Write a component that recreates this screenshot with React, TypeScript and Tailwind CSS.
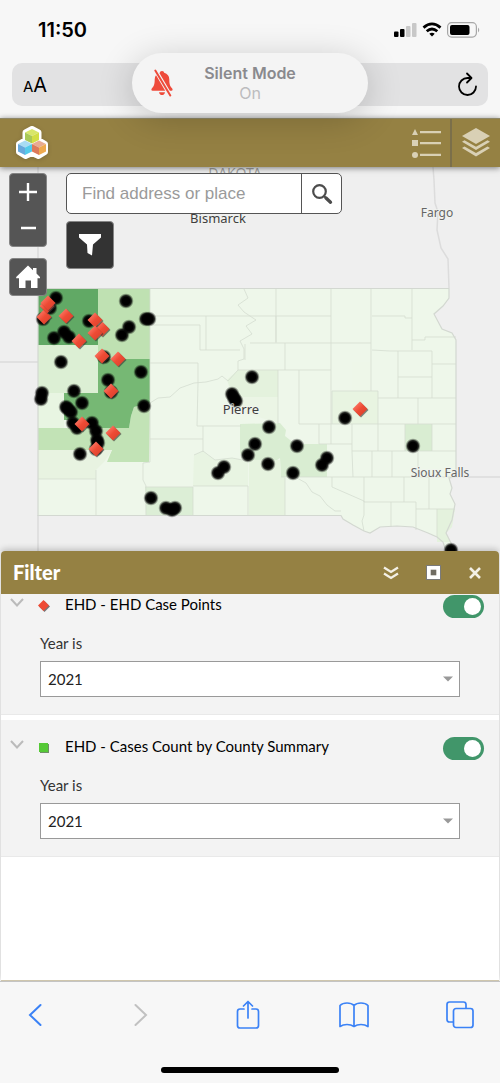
import React from "react";

const DOTS: [number, number][] = [
  [56, 298], [50, 308], [43, 319], [54, 338], [64, 332], [69, 337], [89, 321], [126, 301], [146, 319], [149, 319],
  [129, 327], [122, 335], [104, 357], [61, 362], [141, 372], [108, 380], [111, 392], [42, 393], [41, 399], [74, 391],
  [82, 403], [66, 407], [68, 409], [71, 412], [144, 406], [73, 423], [77, 428], [92, 423], [96, 431], [97, 440],
  [98, 443], [96, 449], [80, 454], [151, 498], [166, 508], [172, 510], [175, 508], [252, 377], [232, 394], [234, 398],
  [236, 401], [269, 427], [255, 444], [248, 455], [268, 464], [224, 467], [218, 473], [297, 446], [293, 473],
  [327, 458], [322, 465], [345, 418], [413, 446], [451, 550],
];

const DIAMONDS: [number, number][] = [
  [44, 317], [47, 306], [48, 303], [66, 316], [79, 341], [102, 329], [95, 320], [95, 333], [102, 356], [118, 359],
  [111, 391], [82, 424], [113, 433], [96, 449], [360, 409],
];

const STATE =
  "M38 288.500H449V298L443 306L434 314L442 329L452 333L456 340V477L449 478L452 488L450 494L455 504L452 520L446 533L455 551H446L443 542L437 537L428 533L413 527L397 526L380 527L370 533L364 531L353 525L343 519L341 515.500H38Z";

const COUNTIES: [string, string][] = [
  ["M38 288H98V345H38Z", "#61a965"],
  ["M98 288H150V359H98Z", "#bfe1b2"],
  ["M38 345H98V393H38Z", "#dcefd4"],
  ["M38 393H64V428H38Z", "#e8f5e2"],
  ["M38 428H129L131 416L134 407L150 403L149 462H107L112 450H38Z", "#c2e3b6"],
  ["M98 359H150V403L134 407L131 416L129 428H73L70 420H64V393H98Z", "#76b874"],
  ["M38 450H112L104 462L96 470V479H38Z", "#e8f3e1"],
  ["M145 487H193V515H146Z", "#dceed6"],
  ["M194 455L203 451L215 460L232 458L248 461V486H193Z", "#e8f4e2"],
  ["M240 424L280 423L286 430L285 436L295 444H327V477H281L280 458L274 462L248 461L240 453Z", "#d9edd2"],
  ["M249 460L280 460L281 477H285V515H249Z", "#e6f3df"],
  ["M227 380L238 370H278V397H233Z", "#e4f2dd"],
  ["M233 397H278V424L262 418L233 410Z", "#ebf5e5"],
  ["M332 391H378V424H332Z", "#e8f4e1"],
  ["M405 424H432V451H405Z", "#d9edd2"],
  ["M437 509H455L452 527L446 533L450 542H437Z", "#e4f2dd"],
  ["M352 362H372V391H352Z", "#eef7e9"],
];

const COUNTY_LINES = [
  "M150 288V462L143 463V480L146 486V515M150 325H200V350H240M150 316H331M96 470V515M38 479H96",
  "M150 403L158 398L170 397L180 388L194 383L206 382L218 379L222 376L228 381L238 370V361L244 359V349L240 341L252 334L246 326L256 320L244 312L238 305L248 298L244 289",
  "M276 288V342M331 288V444M371 288V391M412 288V350M250 343H371M285 343V370M245 344V360M238 370H331M278 370V424M299 370V424",
  "M372 316H405V318H412M412 340H425V337H456M372 350L390 351H432V398M398 351V398H378M398 377H432M432 364H456M398 398H456M418 398V424",
  "M150 363H198V383L197 426H241M150 439H203V426M203 439V452M299 424H456M319 424V444H352M352 424V452L353 477M378 391V451M332 391H378M332 391V424",
  "M352 451H456M372 451V477M392 451V477M418 451V477M405 424V451M432 424V451M281 477H456M332 477V487L364 501V515L362 521L364 531",
  "M364 477V502H416V530M404 477V502M391 502V527M429 477V509M416 509H455M437 509V537M145 487H193V515M193 486H248V515M285 478V515",
  "M297 478L306 483L312 492L320 496L327 505L335 511L341 511",
  "M276 316V343M206 316V350M194 455L203 451L215 460L232 458L248 461",
];

const DIAMOND = "M0 -7.500L7.500 0L0 7.500L-7.500 0Z";

function CaseMap() {
  return (
    <svg
      className="block h-full w-full"
      viewBox="0 167 500 384"
      preserveAspectRatio="xMidYMid slice"
      role="img"
      aria-label="County map"
    >
      <defs>
        <radialGradient id="dot">
          <stop offset="0.500" stopColor="#000" />
          <stop offset="0.700" stopColor="#000" stopOpacity="0.850" />
          <stop offset="0.850" stopColor="#000" stopOpacity="0.350" />
          <stop offset="1" stopColor="#000" stopOpacity="0" />
        </radialGradient>
        <linearGradient id="gem" x1="0" y1="0" x2="1" y2="1">
          <stop offset="0.200" stopColor="#fb7361" />
          <stop offset="0.500" stopColor="#ee4b35" />
          <stop offset="0.900" stopColor="#d9402c" />
        </linearGradient>
      </defs>
      <rect x="0" y="167" width="500" height="384" fill="#efefef" />
      <g fill="none" stroke="#dcdcdc" strokeWidth="1.500">
        <path d="M38 167V288M38 515V551M0 362H38M456 477H500" />
        <path d="M433 167L434 180L435 203L438 212L437 230L441 248L448 259L449 288" />
      </g>
      <path d={STATE} fill="#eef7ea" />
      {COUNTIES.map(([d, fill]) => (
        <path key={d} d={d} fill={fill} />
      ))}
      <g fill="none" stroke="#d5ddd1" strokeOpacity="0.800">
        {COUNTY_LINES.map((d) => (
          <path key={d} d={d} />
        ))}
      </g>
      <path d={STATE} fill="none" stroke="#d3d8d1" strokeWidth="1.200" />
      {DOTS.map(([x, y]) => (
        <circle key={`${x}-${y}`} cx={x} cy={y} r="7.800" fill="url(#dot)" />
      ))}
      {DIAMONDS.map(([x, y]) => (
        <g key={`${x}-${y}`} transform={`translate(${x} ${y})`}>
          <path d={DIAMOND} transform="translate(1 1)" fill="#333" fillOpacity="0.600" />
          <path d={DIAMOND} fill="url(#gem)" />
        </g>
      ))}
      <g
        className="font-['Noto_Sans',sans-serif] text-[12px]"
        textAnchor="middle"
        stroke="#f2f4f0"
        strokeWidth="2"
        strokeOpacity="0.700"
        paintOrder="stroke"
      >
        <text x="235" y="178" fill="#a3a3a3" className="text-[14px]">DAKOTA</text>
        <text x="218" y="223" fill="#3f3f3f" className="text-[13px]">Bismarck</text>
        <text x="437" y="217" fill="#666">Fargo</text>
        <text x="241" y="414" fill="#3f3f3f" className="text-[13px]">Pierre</text>
        <text x="440" y="477" fill="#666">Sioux Falls</text>
      </g>
    </svg>
  );
}

function StatusIcons() {
  return (
    <svg width="87" height="16" viewBox="0 0 87 16" aria-hidden="true">
      <rect x="0" y="9.500" width="4.500" height="5.500" rx="1" />
      <rect x="6" y="7" width="4.500" height="8" rx="1" />
      <rect x="12" y="4" width="4.500" height="11" rx="1" fill="#c8c8c8" />
      <rect x="18" y="1" width="4.500" height="14" rx="1" fill="#c8c8c8" />
      <g fill="none" stroke="#000" strokeWidth="2.800">
        <path d="M29.500 5.600Q38 -1.800 46.500 5.600" />
        <path d="M32.700 9.200Q38 4.700 43.300 9.200" />
      </g>
      <path d="M35.300 11.800Q38 9.700 40.700 11.800L38 14.600Z" />
      <rect x="53.600" y="0.700" width="28.800" height="14.400" rx="4" fill="none" stroke="#a7a7a7" strokeWidth="1.200" />
      <rect x="56" y="3" width="19.500" height="10" rx="2" />
      <path d="M84 5.500Q86.500 8 84 10.500Z" fill="#a7a7a7" />
    </svg>
  );
}

function BellSlash() {
  return (
    <svg width="24" height="28" viewBox="0 0 24 28" aria-hidden="true">
      <path
        d="M12 2C10.500 2 10 3 9.800 3.700C6.500 4.500 4.700 7 4.700 10.500C4.700 15.500 3.800 17.500 2 19.300C1 20.400 1.300 21.800 2.500 21.800H21.500C22.700 21.800 23 20.400 22 19.300C20.200 17.500 19.300 15.500 19.300 10.500C19.300 7 17.500 4.500 14.200 3.700C14 3 13.500 2 12 2Z"
        fill="#ee4b3b"
      />
      <path d="M9 23.200H15Q14.500 26 12 26T9 23.200Z" fill="#ee4b3b" />
      <path d="M5.300 1L20.300 26.500" stroke="#f4f4f4" strokeWidth="4" />
      <path d="M5.300 1.500L20.300 26.500" stroke="#ee4b3b" strokeWidth="2" strokeLinecap="round" />
    </svg>
  );
}

function CubesLogo() {
  return (
    <svg width="36" height="36" viewBox="0 0 36 36" aria-label="App logo" role="img" className="drop-shadow-sm">
      <path
        d="M18 4L24.500 7.500V15L31 19V27L24.500 31L18 28L11.500 31L5 27V19L11.500 15V7.500Z"
        fill="#fff"
        stroke="#fff"
        strokeWidth="6"
        strokeLinejoin="round"
      />
      <path d="M18 4L25 7.500L18 11L11 7.500Z" fill="#d8e66a" />
      <path d="M11 7.500L18 11V18.500L11 15Z" fill="#a9c957" />
      <path d="M25 7.500L18 11V18.500L25 15Z" fill="#d2de45" />
      <path d="M11 15.500L18 19L11 22.500L4 19Z" fill="#a8dcf3" />
      <path d="M4 19L11 22.500V30L4 26.500Z" fill="#68a9dc" />
      <path d="M18 19L11 22.500V30L18 26.500Z" fill="#55cbea" />
      <path d="M25 15.500L32 19L25 22.500L18 19Z" fill="#e8ab91" />
      <path d="M18 19L25 22.500V30L18 26.500Z" fill="#dc7a5b" />
      <path d="M32 19L25 22.500V30L32 26.500Z" fill="#efaa4f" />
    </svg>
  );
}

function FilterItem({ id, title, children }: { id: string; title: string; children: React.ReactNode }) {
  return (
    <section className="h-[137px] border-b border-[#e9e9e9] bg-[#f3f3f3] pt-4">
      <div className="flex h-6 items-center pr-[15px]">
        <button aria-label={`Collapse ${title}`} className="flex w-8 justify-center self-start pt-1">
          <svg width="14" height="9" viewBox="0 0 14 9" fill="none" stroke="#bbb" strokeWidth="2">
            <path d="M1 1L7 7.500L13 1" />
          </svg>
        </button>
        <span className="flex w-[22px] justify-center">{children}</span>
        <label htmlFor={`${id}-on`} className="ml-[10px] flex-1 pb-1 font-['Lato',sans-serif] text-[15px] leading-5 text-black">
          {title}
        </label>
        <input
          id={`${id}-on`}
          type="checkbox"
          defaultChecked
          className="flex h-[23px] w-[41px] appearance-none items-center rounded-full bg-[#a8a8a8] px-[3px] before:block before:size-[17px] before:rounded-full before:bg-white checked:justify-end checked:bg-[#41966a]"
        />
      </div>
      <div className="flex flex-col px-[39px] pt-[15px]">
        <label htmlFor={`${id}-year`} className="font-['Lato',sans-serif] text-[15px] leading-5 text-[#333]">
          Year is
        </label>
        <div className="mt-2 grid items-center">
          <select
            id={`${id}-year`}
            className="col-start-1 row-start-1 h-9 w-full appearance-none border border-[#999] bg-white px-[7px] font-['Lato',sans-serif] text-[15px] text-[#222]"
          >
            <option>2021</option>
          </select>
          <svg className="pointer-events-none col-start-1 row-start-1 mr-[7px] justify-self-end" width="10" height="6" viewBox="0 0 10 6">
            <path d="M0 0.500H10L5 5.500Z" fill="#999" />
          </svg>
        </div>
      </div>
    </section>
  );
}

export default function App() {
  return (
    <div className="relative flex min-h-screen flex-col overflow-hidden bg-[#f7f7f7] font-['Inter',sans-serif]">
      <div className="px-3 pb-3">
        <div className="flex h-[63px] items-start justify-between pr-[7px] pl-[26px]">
          <span className="pt-4 text-[20px] leading-7 font-semibold text-black">11:50</span>
          <span className="pt-[22px]"><StatusIcons /></span>
        </div>
        <div className="flex h-[43px] items-center rounded-[10px] bg-[#e2e2e3] pr-[9px] pl-[11px]">
          <button aria-label="Page settings" className="flex items-baseline text-black">
            <span className="text-[15px]">A</span>
            <span className="text-[20px]">A</span>
          </button>
          <button aria-label="Reload" className="ml-auto">
            <svg width="24" height="26" viewBox="0 0 24 26" fill="none" stroke="#000" strokeWidth="1.800" strokeLinecap="round" strokeLinejoin="round">
              <path d="M15 6H12.500A8.500 8.500 0 1 0 21 14.500" />
              <path d="M12 1.500L16.500 6L12 10.500" />
            </svg>
          </button>
        </div>
      </div>

      <div
        role="status"
        className="absolute top-[53px] left-1/2 z-30 flex h-[60px] w-[236px] -translate-x-1/2 items-center rounded-full bg-[#f4f4f4] px-[18px] shadow-[0_6px_36px_rgba(0,0,0,0.2)]"
      >
        <BellSlash />
        <div className="flex-1 pr-6 text-center">
          <div className="text-[16px] leading-5 font-semibold text-[#8a8a8e]">Silent Mode</div>
          <div className="text-[16px] leading-5 text-[#bcbcbe]">On</div>
        </div>
      </div>

      <header className="relative z-10 flex h-[49px] items-center border-t border-[#8e8768] bg-[#958143] pl-[14px] shadow-[0_1px_6px_rgba(0,0,0,0.5)]">
        <CubesLogo />
        <button aria-label="Legend" className="mr-[7px] ml-auto">
          <svg width="32" height="32" viewBox="0 0 32 32" fill="#d9d0b5">
            <path d="M4 2L7 8H1ZM1 13H7V19H1ZM9 4H30V6.300H9ZM9 15H30V17.300H9ZM9 26.800H30V29H9Z" />
            <circle cx="4" cy="28" r="3" />
          </svg>
        </button>
        <button aria-label="Layers" className="flex h-full w-[50px] items-center justify-center border-l-2 border-[#7b6f4a]">
          <svg width="30" height="32" viewBox="0 0 30 32" fill="#d9d0b5">
            <path d="M15 1L29 9L15 17L1 9Z" />
            <path d="M1 14.800L3.500 13.200L15 19.800L26.500 13.200L29 14.800L15 23Z" />
            <path d="M1 21L3.500 19.400L15 26L26.500 19.400L29 21L15 29.400Z" />
          </svg>
        </button>
      </header>

      <main className="relative h-96 shrink-0">
        <CaseMap />
        <div className="absolute top-[6px] left-[9px] flex flex-col gap-[11px]">
          <div className="flex w-[38px] flex-col overflow-hidden rounded-[4px] border border-[#858585] bg-[#555] text-white">
            <button aria-label="Zoom in" className="flex h-9 items-center justify-center">
              <svg width="18" height="18" viewBox="0 0 18 18" stroke="#fff" strokeWidth="2.400"><path d="M0 9H18M9 0V18" /></svg>
            </button>
            <button aria-label="Zoom out" className="flex h-9 items-center justify-center">
              <svg width="15" height="4" viewBox="0 0 15 4" stroke="#fff" strokeWidth="2.600"><path d="M0 2H15" /></svg>
            </button>
          </div>
          <button aria-label="Home" className="flex h-[38px] w-[38px] items-center justify-center rounded-[4px] border border-[#858585] bg-[#555]">
            <svg width="26" height="26" viewBox="0 0 26 26" fill="#fff">
              <path d="M13 1.500L18 6.300V4H21.500V9.600L25 13V14.300H22.500V24H16V16.500H10.500V24H4V14.300H1.200V13Z" />
            </svg>
          </button>
        </div>
        <div className="absolute top-[6px] left-[66px] flex flex-col items-start gap-[7px]">
          <form className="flex h-[41px] w-[276px] overflow-hidden rounded-[5px] border border-[#555] bg-white" onSubmit={(e) => e.preventDefault()}>
            <input
              type="text"
              aria-label="Find address or place"
              placeholder="Find address or place"
              className="min-w-0 flex-1 pl-[15px] font-['Liberation_Sans',sans-serif] text-[17px] placeholder:text-[#9a9a9a]"
            />
            <button aria-label="Search" className="flex w-10 items-center justify-center border-l border-[#555]">
              <svg width="22" height="22" viewBox="0 0 22 22" fill="none" stroke="#4c4c4c">
                <circle cx="8.500" cy="8.500" r="6.300" strokeWidth="2.200" />
                <path d="M13 13L15 15" strokeWidth="2" />
                <path d="M15 15L19.500 19.200" strokeWidth="3.400" strokeLinecap="round" />
              </svg>
            </button>
          </form>
          <button aria-label="Filter" className="flex h-12 w-12 items-center justify-center rounded-[4px] border border-[#858585] bg-[#333]">
            <svg width="24" height="24" viewBox="0 0 24 24" fill="#fff">
              <path d="M1 1H23V4.500L15 11.500L14 22.500L9.500 20L9 11.500L1 4.500Z" />
            </svg>
          </button>
        </div>
      </main>

      <section className="relative mx-px flex flex-1 flex-col rounded-t-[4px] border-b border-[#cfc6ad] bg-white shadow-[0_-2px_6px_rgba(0,0,0,0.2)]">
        <div className="relative z-10 flex h-[43px] items-center rounded-t-[4px] bg-[#958143] pr-[3px] pl-3">
          <h2 className="flex-1 pb-[2px] font-['Lato',sans-serif] text-[20px] leading-6 font-black text-white">Filter</h2>
          <button aria-label="Minimize" className="flex w-[42px] justify-center">
            <svg width="16" height="14" viewBox="0 0 16 14" fill="none" stroke="#f3f0e6" strokeWidth="2.300">
              <path d="M1 1.500L8 6L15 1.500M1 7.500L8 12L15 7.500" />
            </svg>
          </button>
          <button aria-label="Maximize" className="flex w-[42px] justify-center">
            <svg width="15" height="15" viewBox="0 0 15 15">
              <rect x="0.500" y="0.500" width="14" height="14" fill="#fff" stroke="#7a7a7a" />
              <rect x="4.700" y="4.700" width="5.600" height="5.600" fill="#706c62" />
            </svg>
          </button>
          <button aria-label="Close" className="flex w-[42px] justify-center">
            <svg width="12" height="12" viewBox="0 0 12 12" stroke="#f3f0e6" strokeWidth="2.600">
              <path d="M1 1L11 11M11 1L1 11" />
            </svg>
          </button>
        </div>
        <div className="-mt-4 flex flex-col gap-[5px]">
          <FilterItem id="points" title="EHD - EHD Case Points">
            <svg width="14" height="14" viewBox="0 0 14 14">
              <path d="M7.500 2L13 7.500L7.500 13L2 7.500Z" fill="#777" />
              <path d="M6.500 1L12 6.500L6.500 12L1 6.500Z" fill="#ee4b35" />
            </svg>
          </FilterItem>
          <FilterItem id="summary" title="EHD - Cases Count by County Summary">
            <svg width="10" height="10" viewBox="0 0 10 10">
              <rect x="1" y="1" width="9" height="9" fill="#6f8f68" />
              <rect x="0" y="0" width="9" height="9" fill="#55c936" />
            </svg>
          </FilterItem>
        </div>
      </section>

      <footer className="relative flex h-[102px] flex-col justify-between border-t border-[#c4c4c4] bg-[#f7f7f7] pb-[10px]">
        <nav className="flex items-center justify-between pt-[16px] pr-[25px] pl-5" aria-label="Browser">
          <button aria-label="Back" className="flex w-[30px] justify-center">
            <svg width="14" height="24" viewBox="0 0 14 24" fill="none" stroke="#3b82f6" strokeWidth="2" strokeLinecap="round"><path d="M12.500 2L2 12L12.500 22" /></svg>
          </button>
          <button aria-label="Forward" className="flex w-[30px] justify-center">
            <svg width="14" height="24" viewBox="0 0 14 24" fill="none" stroke="#c1c1c1" strokeWidth="2" strokeLinecap="round"><path d="M1.500 2L12 12L1.500 22" /></svg>
          </button>
          <button aria-label="Share" className="flex w-[30px] justify-center">
            <svg width="26" height="34" viewBox="0 0 26 34" fill="none" stroke="#3b82f6" strokeWidth="1.700" strokeLinecap="round" strokeLinejoin="round">
              <path d="M9 11H5Q2.500 11 2.500 13.500V27.500Q2.500 30 5 30H21Q23.500 30 23.500 27.500V13.500Q23.500 11 21 11H17" />
              <path d="M13 20V3.500M8.500 8L13 3.500L17.500 8" />
            </svg>
          </button>
          <button aria-label="Bookmarks" className="flex w-[30px] justify-center">
            <svg width="30" height="28" viewBox="0 0 30 28" fill="none" stroke="#3b82f6" strokeWidth="1.700" strokeLinejoin="round">
              <path d="M15 4.500Q12.500 2 8 2T1 4.500V25.500Q4 23.500 8 23.500T15 25.500Q18 23.500 22 23.500T29 25.500V4.500Q26.500 2 22 2T15 4.500V25.500" />
            </svg>
          </button>
          <button aria-label="Tabs" className="flex w-[30px] justify-center">
            <svg width="30" height="30" viewBox="0 0 30 30" fill="none" stroke="#3b82f6" strokeWidth="1.700">
              <rect x="8.500" y="8.500" width="19.500" height="19" rx="2.500" />
              <path d="M8 22H4.500Q2 22 2 19.500V4.500Q2 2 4.500 2H18.500Q21 2 21 4.500V8" />
            </svg>
          </button>
        </nav>
        <div className="h-[6px] w-[178px] self-center rounded-full bg-black" />
      </footer>
    </div>
  );
}
